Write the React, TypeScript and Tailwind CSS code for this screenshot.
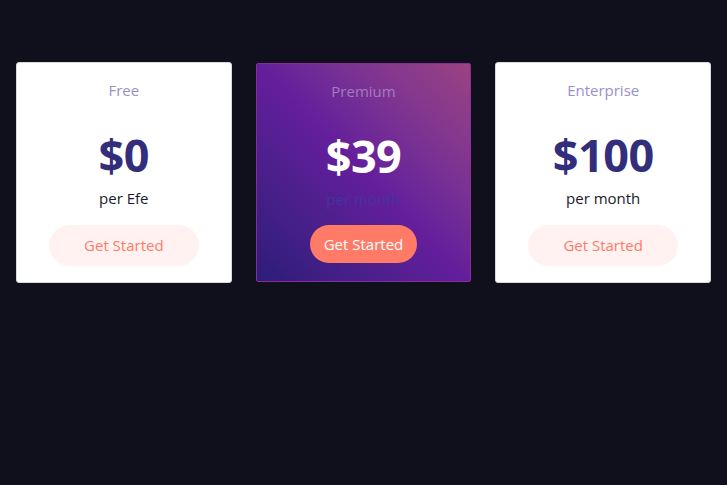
import React from "react";

const font = { fontFamily: '"Open Sans", "Noto Sans", sans-serif' };

function Card({ title, price, period, featured }: { title: string; price: string; period: string; featured?: boolean }) {
  return (
    <div
      className={
        featured
          ? "flex-1 h-[219px] mt-[1px] rounded-[2px] border border-[#8a2c98] bg-gradient-to-tr from-[#2c1d78] via-[#641e9c] to-[#9c4282] flex flex-col items-center"
          : "flex-1 h-[221px] rounded-[3px] bg-white border border-[#d8d8e0] flex flex-col items-center"
      }
    >
      <div className={"mt-[15px] text-[15px] leading-[24px] " + (featured ? "text-[#a27cc2]" : "text-[#9a8fc8]")}>{title}</div>
      <div className={"mt-[26px] text-[45px] font-bold leading-[54px] tracking-[-0.5px] " + (featured ? "text-white" : "text-[#332e7c]")}>{price}</div>
      <div className={"mt-[5px] text-[15px] leading-[22px] " + (featured ? "text-[#44359a]" : "text-[#1a1a2a]")}>{period}</div>
      {featured ? (
        <button className="mt-[15px] h-[38px] px-[14px] rounded-full bg-[#ff7b67] text-white text-[15px]">Get Started</button>
      ) : (
        <button className="mt-[16px] h-[41px] w-[150px] rounded-full bg-[#fff2f1] text-[#ff7b67] text-[15px]">Get Started</button>
      )}
    </div>
  );
}

export default function App() {
  return (
    <div className="w-[727px] h-[485px] bg-[#10101c]" style={font}>
      <div className="flex gap-[24px] px-[16px] pt-[62px]">
        <Card title="Free" price="$0" period="per Efe" />
        <Card title="Premium" price="$39" period="per month" featured />
        <Card title="Enterprise" price="$100" period="per month" />
      </div>
    </div>
  );
}
